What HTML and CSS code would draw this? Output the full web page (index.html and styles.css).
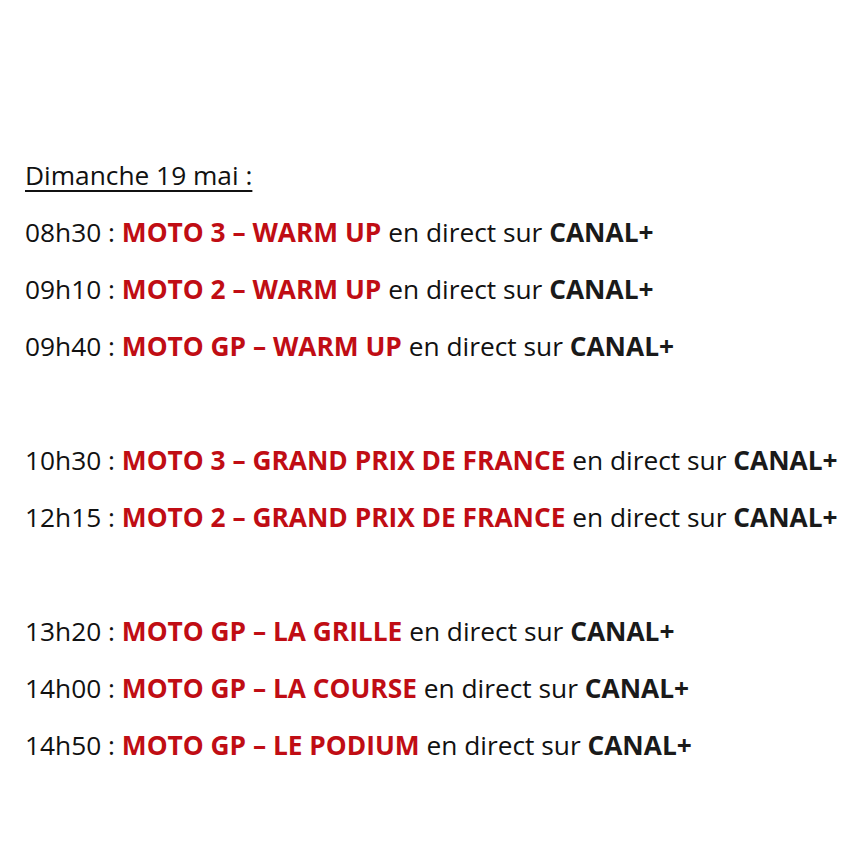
FILE: index.html
```html
<!DOCTYPE html>
<html lang="fr">
<head>
<meta charset="utf-8">
<link rel="stylesheet" href="styles.css">
</head>
<body>
<div class="schedule">
  <p class="line day">Dimanche 19 mai :</p>
  <p class="line">08h30 : <b class="red">MOTO 3 – WARM UP</b> en direct sur <b>CANAL+</b></p>
  <p class="line">09h10 : <b class="red">MOTO 2 – WARM UP</b> en direct sur <b>CANAL+</b></p>
  <p class="line">09h40 : <b class="red">MOTO GP – WARM UP</b> en direct sur <b>CANAL+</b></p>
  <p class="line empty"></p>
  <p class="line">10h30 : <b class="red">MOTO 3 – GRAND PRIX DE FRANCE</b> en direct sur <b>CANAL+</b></p>
  <p class="line">12h15 : <b class="red">MOTO 2 – GRAND PRIX DE FRANCE</b> en direct sur <b>CANAL+</b></p>
  <p class="line empty"></p>
  <p class="line">13h20 : <b class="red">MOTO GP – LA GRILLE</b> en direct sur <b>CANAL+</b></p>
  <p class="line">14h00 : <b class="red">MOTO GP – LA COURSE</b> en direct sur <b>CANAL+</b></p>
  <p class="line">14h50 : <b class="red">MOTO GP – LE PODIUM</b> en direct sur <b>CANAL+</b></p>
</div>
</body>
</html>
```
FILE: styles.css
```css
html, body {
  margin: 0;
  padding: 0;
  background: #ffffff;
}
body {
  width: 867px;
  height: 867px;
  overflow: hidden;
}
.schedule {
  padding: 147px 0 0 25px;
  font-family: "Open Sans", "Noto Sans", sans-serif;
  font-size: 26.3px;
  color: #111111;
}
.line {
  margin: 0;
  height: 57px;
  line-height: 57px;
  white-space: nowrap;
}
.day {
  text-decoration: underline;
  text-underline-offset: 5px;
  text-decoration-thickness: 1.5px;
}
b {
  font-weight: 700;
  color: #1a1a1a;
}
b.red {
  color: #c00d14;
}
```
